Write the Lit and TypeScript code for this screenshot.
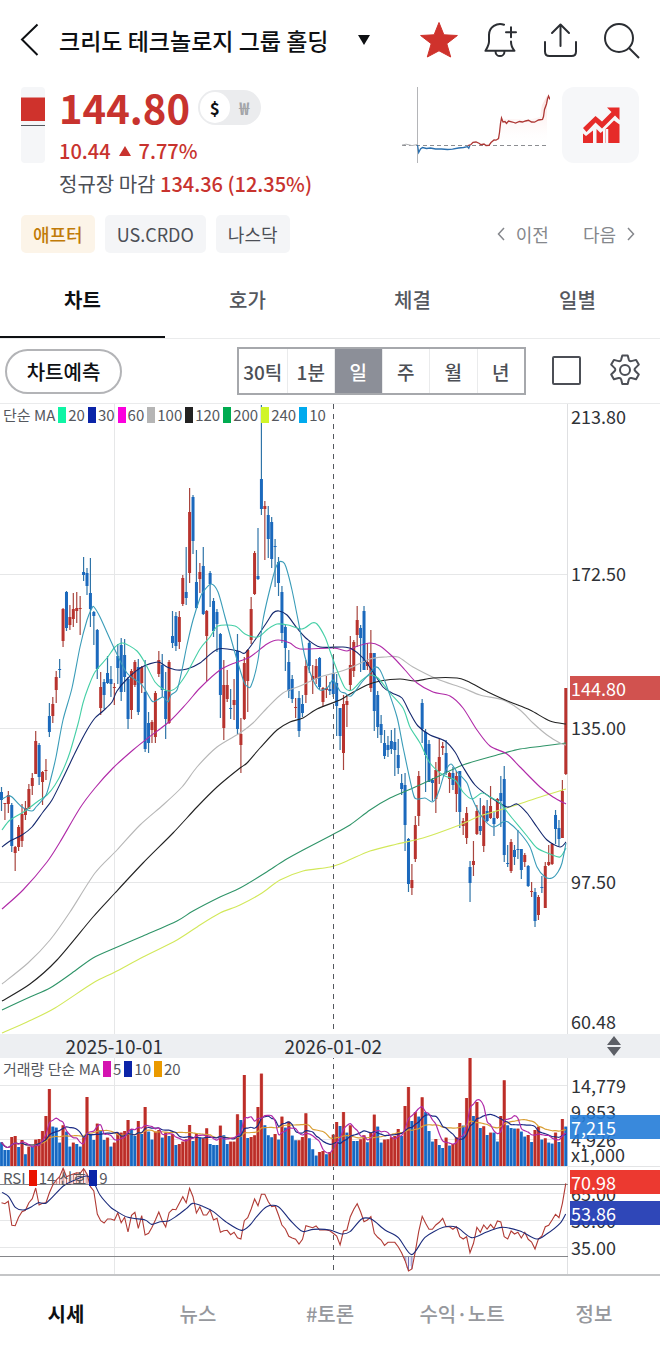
import { LitElement, html, svg, css } from "lit";
import { customElement, property, state } from "lit/decorators.js";
import { classMap } from "lit/directives/class-map.js";

type Point = [number, number];

const PLOT_W = 568;
const STEP = 3.42;
const FIRST_X = 1.5;
const barX = (i: number) => FIRST_X + i * STEP;

// One record per session: direction, high, low, body top, body bottom (screen rows).
const CANDLES = `b787,811,792,800 r803,820,803,804 r791,813,795,804 b803,852,805,846 r846,871,847,853 r825,851,827,847
r804,847,814,841 r801,820,808,815 r784,809,789,809 r773,795,778,786 r731,774,741,774 b743,785,745,777
r771,805,772,782 r759,780,770,771 b703,737,716,732 r697,723,704,716 r671,703,677,690 b659,678,669,670
r608,647,609,641 b591,631,592,628 r605,630,617,625 r593,627,609,619 r592,623,608,611 r596,635,608,609
b557,581,572,575 b568,595,573,586 b558,627,593,609 b611,645,612,616 b629,679,630,669 r672,715,687,708
b679,709,682,695 b656,684,673,683 b666,697,679,684 r683,705,687,688 b644,684,656,668 b638,701,645,692
b639,692,655,677 b677,729,679,719 r669,719,671,710 r660,687,662,685 b659,715,667,712 r666,693,667,683
b660,752,692,749 b712,753,723,743 r720,743,722,730 r691,743,693,737 r651,677,660,674 b654,697,665,690
b672,739,691,719 r660,724,662,723 b611,648,636,643 b612,651,616,646 r611,649,617,642 r575,606,578,604
b547,605,592,598 r488,583,512,573 b495,554,497,541 b550,609,582,608 r563,593,572,579 b547,615,566,614
r610,681,611,636 b571,607,573,584 b598,637,601,631 b609,652,612,624 b633,718,634,695 r660,740,685,728
r670,702,685,699 b689,719,708,709 r679,720,700,705 b634,734,651,729 r718,773,734,745 r657,720,663,719
r649,712,650,681 r597,644,609,640 r551,595,553,594 b528,580,576,579 b405,515,479,509 r501,560,506,509
b506,558,515,539 b517,568,522,559 b539,587,546,547 b557,596,562,583 b586,643,592,633 b624,671,627,648
b650,698,662,691 b675,703,679,699 r698,718,707,708 b691,737,698,731 b695,717,704,713 r660,703,666,695
b641,673,643,666 r665,694,676,680 r659,684,666,679 b657,689,658,687 r687,707,688,702 r676,698,688,690
b682,695,689,691 b655,697,673,694 b674,736,683,706 b708,750,708,736 r695,770,704,753 r695,727,701,705
r636,690,665,685 r640,677,642,671 r606,647,620,635 b625,672,628,638 b606,670,611,670 r643,670,662,666
r630,692,653,688 b653,731,653,711 b691,738,695,727 b715,743,724,735 b730,759,743,756 b736,757,745,750
b730,754,741,749 b728,776,742,750 b739,774,755,768 b774,795,783,789 b773,851,785,825 b838,892,839,884
r864,895,880,888 r816,862,825,859 r771,826,776,816 b699,743,703,729 b729,792,732,755 b740,782,744,782
b778,801,780,783 r762,813,770,799 r739,784,757,771 r742,755,746,748 b740,775,753,772 r772,793,773,779
b767,790,773,785 r771,812,776,794 b771,828,771,812 r818,835,821,826 r807,844,813,838 b861,902,867,883
r841,876,861,865 r805,835,811,834 b798,835,826,831 r805,852,806,846 b800,822,811,821 r786,819,806,818
b811,836,818,824 r798,819,799,818 b776,827,793,801 b766,862,779,855 b845,867,863,864 r839,873,842,871
b845,865,850,857 b830,859,849,850 b849,879,849,870 r853,867,855,862 b865,887,866,886 r882,897,891,892
b888,927,892,921 r895,920,897,915 b876,893,887,888 r862,908,866,908 r845,866,862,865 r843,865,844,864
b810,844,815,829 b820,846,828,839 r780,838,791,838 r688,775,688,774`
  .split(/\s+/)
  .map((s) => ({ up: s[0] === "r", v: s.slice(1).split(",").map(Number) }));

// Bar heights in thirds of a pixel, measured from the volume baseline.
const VOLUMES = `b71 b48 b48 r87 r90 b57 r78 b35 r58 b58 r79 r81 r105 r150 r231 b118 b115 b70 r122 b103 b58 r70 b66 b58 r86
r207 b96 b78 r127 b108 b78 r85 b58 r70 r100 r100 r105 r138 b111 b90 r135 b96 r177 b103 b79 r103 r108 b85 r100 b90
r96 b63 r66 r73 r80 r123 b75 r96 b85 r83 r113 b66 b63 b63 r121 b92 b66 r73 r73 r155 b138 r273 b84 r87 r92
r177 r277 b122 b92 b86 r96 b79 r148 b115 r133 b91 b77 r77 r87 r158 b83 b50 b31 r42 r45 b35 r42 r94 r132 b120
r162 b100 r122 b75 b75 r80 r92 b71 r100 r154 b118 b70 r79 r80 r86 r90 r111 b90 r180 r237 b135 r162 b148 r206 b162
b105 b73 r81 b63 b54 r85 b61 r66 r86 r129 b121 r204 r324 b150 r192 b114 r119 b93 r100 b100 b73 r150 r257 b122 b114
b112 r112 b103 b88 r93 b72 r108 r118 b79 r83 b70 b67 r100 b72 r141 b118`
  .split(/\s+/)
  .map((s) => ({ up: s[0] === "r", h: Number(s.slice(1)) / 3 }));

const RSI = `518 521 514 586 587 562 545 541 518 506 474 525 520 518 488 465 450 440 415 440 436 432 428 430 416 432 470 483
552 572 579 567 567 571 548 578 562 606 556 547 595 557 615 610 592 570 546 572 591 548 538 539 520 500 518 475 500 549
530 555 555 540 570 565 607 602 601 614 607 623 627 572 563 537 507 527 493 493 515 530 528 555 585 597 619 624 628 642
628 587 590 593 588 600 600 600 602 610 618 645 603 600 560 538 521 545 575 570 560 610 622 630 646 637 637 637 650 668
692 723 717 665 605 559 580 598 598 585 577 565 590 590 598 590 620 627 620 668 640 592 607 585 597 583 596 573 576 620
627 603 612 607 624 607 628 636 657 627 618 590 586 570 553 563 520 460`
  .split(/\s+/)
  .map((s, i): Point => [barX(i), Number(s) / 3 - 137]);

const parse = (s: string): Point[] =>
  s.trim().split(/\s+/).map((p) => p.split(",").map(Number) as Point);

const RSI_SIGNAL = parse(`6,487 26,500 46,532 70,540 95,530 115,518 140,518 190,468 220,452 260,438 280,455 300,495 330,530
345,541 384,562 435,570 455,583 480,575 505,573 530,558 560,535 578,520 610,530 640,545 680,577 724,601 750,585 770,560
800,530 835,530 870,570 907,604 940,598 990,600 1025,612 1050,605 1085,567 1115,568 1155,600 1195,623 1235,674 1275,622
1330,592 1370,592 1415,623 1460,606 1505,592 1560,603 1610,627 1640,612 1680,580 1697,552`).map(
  ([x, y]): Point => [x / 3, y / 3 - 137]
);

const AVERAGES = [
  { color: "#d2e85a", pts: `2,1033 27,1022 55,1008 93,983 115,972 143,957 177,940 200,925 220,913 240,905 262,893 280,880 303,871 330,867 347,861 370,851 397,844 423,838 457,826 480,816 510,807 537,798 566,789` },
  { color: "#2f9468", pts: `2,1010 30,997 50,988 72,973 93,958 115,948 143,936 177,921 193,911 220,897 240,888 265,873 285,860 305,849 330,836 350,825 370,810 390,798 413,788 437,777 463,765 497,755 520,749 543,746 566,743` },
  { color: "#b7b7b7", pts: `2,984 28,963 50,940 70,912 95,873 117,850 140,825 163,805 182,787 197,767 217,747 240,733 253,723 267,708 283,693 300,686 320,677 335,673 350,668 370,659 385,657 398,657 413,667 437,679 463,688 480,695 503,700 520,710 533,723 547,735 560,743 566,745` },
  { color: "#222222", pts: `2,1001 30,984 57,960 93,917 115,893 143,863 173,833 197,807 217,787 240,768 247,763 260,748 277,730 290,722 303,718 317,709 340,700 350,694 367,685 380,681 400,679 415,681 433,678 457,678 467,681 490,693 510,702 530,710 550,721 566,724` },
  { color: "#b02aa8", pts: `2,909 23,890 47,862 60,842 80,808 95,788 113,768 133,750 148,738 170,721 187,703 200,688 220,670 237,662 250,657 267,644 278,640 290,643 300,649 333,648 347,651 355,647 370,643 380,646 393,657 405,670 417,683 433,692 450,696 463,708 477,730 490,746 507,754 520,767 540,787 553,797 566,804` },
  { color: "#14286e", pts: `2,847 10,841 22,835 32,827 43,812 52,800 63,778 75,753 87,730 95,718 103,711 112,702 117,691 128,678 142,667 158,662 167,667 177,670 187,669 200,663 218,649 238,651 245,653 255,640 267,622 273,613 279,611 287,615 297,628 307,639 320,647 343,647 352,649 363,658 373,672 383,687 392,693 402,698 410,713 418,726 430,735 445,741 455,752 463,767 475,785 490,797 507,807 517,804 527,813 537,827 547,840 560,847 566,842` },
  { color: "#45cfa6", pts: `2,830 10,820 25,811 37,802 47,795 55,785 63,770 70,752 78,724 83,703 88,688 95,672 107,658 115,647 123,643 137,651 145,663 155,682 163,689 170,691 177,687 187,673 200,649 210,637 218,626 235,626 245,634 258,637 268,629 277,624 288,625 302,629 312,623 317,624 325,637 330,651 337,670 345,688 352,690 362,680 370,675 378,678 390,693 403,708 410,727 420,743 430,763 443,775 455,780 463,792 472,799 482,793 490,797 500,803 512,818 527,836 537,848 550,854 560,857 566,848` },
  { color: "#3a9cb8", pts: `2,799 8,796 12,797 22,807 32,811 36,807 46,795 51,778 56,757 63,720 72,688 80,647 87,620 92,608 94,607 100,617 115,650 127,673 142,685 152,701 157,700 163,697 168,702 171,695 177,690 182,670 187,645 193,620 200,598 203,592 211,584 218,592 225,617 235,653 244,682 247,686 251,686 258,660 263,620 273,577 278,563 283,562 286,567 292,590 300,630 305,657 313,680 320,690 328,687 333,680 340,691 345,693 351,696 362,682 370,673 375,667 380,670 387,687 397,717 403,747 413,793 417,799 425,798 432,802 436,798 440,788 445,772 451,764 457,772 467,783 472,798 482,817 493,827 503,822 508,822 520,833 530,847 537,867 545,877 552,878 558,872 562,863 566,843` },
].map((a) => ({ color: a.color, pts: parse(a.pts) }));

function smooth(p: Point[]): string {
  let d = `M${p[0][0]} ${p[0][1]}`;
  for (let i = 0; i < p.length - 1; i++) {
    const a = p[Math.max(0, i - 1)], b = p[i], c = p[i + 1], e = p[Math.min(p.length - 1, i + 2)];
    d += `C${(b[0] + (c[0] - a[0]) / 7).toFixed(1)} ${(b[1] + (c[1] - a[1]) / 7).toFixed(1)} ${(c[0] - (e[0] - b[0]) / 7).toFixed(1)} ${(c[1] - (e[1] - b[1]) / 7).toFixed(1)} ${c[0]} ${c[1]}`;
  }
  return d;
}

const line = (p: Point[]) => "M" + p.map(([x, y]) => `${x.toFixed(1)} ${y.toFixed(1)}`).join("L");

function volumeAverage(n: number): Point[] {
  return VOLUMES.map((_, i): Point => {
    const part = VOLUMES.slice(Math.max(0, i - n + 1), i + 1);
    return [barX(i), 108 - part.reduce((s, v) => s + v.h, 0) / part.length];
  });
}

const RED = "#b8332e";
const BLUE = "#1b69bd";

const guides = (h: number) => svg`
  <path d="M114.5 0V${h}" stroke="#e6e7e8" />
  <path d="M567.5 0V${h}" stroke="#dfe0e2" />
`;
const yearLine = (h: number, offset = 0) => svg`
  <path d="M333.5 0V${h}" stroke="#55585e" stroke-dasharray="5 5" stroke-dashoffset=${offset} />
`;

interface Label { text: string; at: number; tag?: string }
interface Legend { text?: string; color?: string }

@customElement("chart-panel")
export class ChartPanel extends LitElement {
  static styles = css`
    :host { display: grid; grid-template-columns: minmax(0, 1fr) 92px; position: relative; }
    .plot { display: block; width: 100%; }
    .axis { position: relative; }
    .label {
      position: absolute; left: 3px; transform: translateY(-50%);
      font-size: 18px; line-height: 24px; color: #2f3237; white-space: nowrap;
    }
    .tag { left: 2px; right: 0; padding-left: 1px; color: #fff; }
    .red { background: rgba(201, 52, 48, 0.85); }
    .bright { background: rgba(235, 45, 35, 0.94); }
    .blue { background: rgba(36, 124, 216, 0.9); }
    .navy { background: rgba(34, 60, 180, 0.94); }
    .legend {
      position: absolute; left: 3px; top: 1px; display: flex; align-items: center; gap: 2px;
      font-size: 15px; line-height: 20px; color: #55585e; white-space: nowrap;
    }
    .swatch { width: 8px; height: 16px; margin-left: 1px; }
  `;
  @property({ attribute: false }) labels: Label[] = [];
  @property({ attribute: false }) legend: Legend[] = [];
  @property({ attribute: false }) drawing: unknown;
  @property({ type: Number }) size = 100;
  @property() name = "";

  render() {
    return html`
      <svg class="plot" height=${this.size} viewBox="0 0 ${PLOT_W} ${this.size}" preserveAspectRatio="none"
        role="img" aria-label=${this.name} fill="none">${this.drawing}</svg>
      <div class="axis">
        ${this.labels.map((l) => html`<span
          class=${classMap({ label: true, tag: !!l.tag, [l.tag ?? "plain"]: true })}
          style="top:${l.at}px">${l.text}</span>`)}
      </div>
      <div class="legend">
        ${this.legend.map((l) => l.color
          ? html`<span class="swatch" style="background:${l.color}"></span>`
          : html`<span>${l.text}</span>`)}
      </div>
    `;
  }
}

@customElement("app-root")
export class AppRoot extends LitElement {
  static styles = css`
    :host {
      display: block; background: #fff; color: #0e1013; overflow: hidden;
      font-family: "Noto Sans CJK KR", "Noto Sans", sans-serif;
    }
    * { box-sizing: border-box; }
    button, a { font: inherit; color: inherit; text-decoration: none; }
    button { background: none; border: 0; margin: 0; padding: 0; cursor: pointer; }
    svg { display: block; }

    .header { display: flex; align-items: center; height: 80px; padding: 0 18px 0 20px; }
    .back { width: 39px; }
    .title { display: flex; align-items: center; gap: 30px; font-size: 23px; line-height: 32px; white-space: nowrap; }
    .title h1 { margin: 0; font-size: inherit; font-weight: 500; }
    .actions { display: flex; gap: 21px; margin-left: auto; }

    .quote { display: flex; align-items: flex-start; padding: 7px 21px 0; }
    .daybar { width: 24px; margin-right: 14px; }
    .figures { display: flex; flex-direction: column; white-space: nowrap; color: #c8332e; }
    .price { display: flex; align-items: center; gap: 8px; height: 40px; margin-bottom: 11px; }
    .price strong { font-size: 40px; line-height: 40px; font-weight: 700; }
    .currency { display: flex; padding: 2px; width: 63px; height: 35px; border-radius: 18px; background: #ebecee; }
    .currency button { flex: 1; border-radius: 16px; font-size: 17px; line-height: 31px; font-weight: 700; color: #a2a4a8; }
    .currency .on { background: #fff; color: #0e1013; }
    .change { display: flex; align-items: center; gap: 8px; font-size: 20px; line-height: 26px; font-weight: 500; margin-bottom: 7px; }
    .close { font-size: 20px; line-height: 26px; font-weight: 500; }
    .close span { color: #4c4f56; font-weight: 400; }
    .spark { margin-left: auto; }
    .insight { display: grid; place-items: center; width: 77px; height: 76px; margin-left: 12px; border-radius: 12px; background: #f6f7f9; }

    .meta { display: flex; align-items: center; gap: 10px; padding: 18px 25px 10px 21px; }
    .chip { height: 38px; padding: 0 12px; border-radius: 5px; background: #f4f5f7; color: #4c4f56; font-size: 18px; line-height: 38px; white-space: nowrap; }
    .chip.after { background: #fcf4e8; color: #c17b08; font-weight: 500; }
    .pager { display: flex; gap: 34px; margin-left: auto; color: #85878c; font-size: 18px; line-height: 26px; white-space: nowrap; }
    .pager button { display: flex; align-items: center; gap: 11px; }

    .tabs { display: grid; grid-template-columns: repeat(4, 1fr); border-bottom: 1px solid #eaebec; }
    .tabs button { height: 75px; font-size: 20px; font-weight: 500; color: #55585e; border-bottom: 2px solid transparent; }
    .tabs .on { color: #0e1013; font-weight: 700; border-color: #0e1013; }

    .toolbar { display: flex; align-items: center; height: 65px; padding: 0 18px 0 5px; border-bottom: 1px solid #eaebec; }
    .forecast { width: 117px; height: 45px; border: 2px solid #b3b4b7; border-radius: 23px; font-size: 20px; font-weight: 500; color: #0e1013; }
    .periods { display: grid; grid-template-columns: repeat(6, 1fr); width: 289px; margin-left: auto; border: 2px solid #a6a8ac; }
    .periods button { height: 44px; font-size: 19px; font-weight: 500; color: #4c4f56; border-left: 1px solid #eaebec; white-space: nowrap; }
    .periods button:first-child { border-left: 0; }
    .periods .on { background: #8c8f98; color: #fff; }
    .tool { margin-left: 26px; }

    .dates { display: grid; grid-template-columns: minmax(0, 1fr) 92px; height: 24px; background: #edeff2; font-size: 19px; line-height: 24px; color: #2f3237; }
    .track { position: relative; }
    .date { position: absolute; transform: translateX(-50%); }
    .sort { justify-self: center; align-self: center; }
    .split { border-top: 1px solid #e3e4e6; }

    .bottom { display: grid; grid-template-columns: repeat(5, 1fr); border-top: 2px solid #c4c5c7; }
    .bottom a { height: 76px; line-height: 76px; text-align: center; font-size: 20px; font-weight: 500; color: #96989d; }
    .bottom .on { color: #0e1013; font-weight: 700; }
  `;

  @state() private tab = "차트";
  @state() private period = "일";
  @state() private currency = "$";

  private priceDrawing() {
    const top = 404;
    return svg`
      <path d="M0 170.5H568M0 324.5H568M0 478.5H568" stroke="#e6e7e8" />
      ${guides(630)}
      ${CANDLES.map(({ up, v }, i) => svg`
        <path d="M${barX(i)} ${v[0] - top}V${v[1] - top}" stroke=${up ? "#a8453e" : "#2f74a8"} stroke-width="1.2" />
        <rect x=${barX(i) - 1.5} y=${v[2] - top} width="3" height=${Math.max(1, v[3] - v[2])} fill=${up ? RED : BLUE} />`)}
      <g transform="translate(0 ${-top})" stroke-width="1.1">
        ${AVERAGES.map((a) => svg`<path d=${smooth(a.pts)} stroke=${a.color} />`)}
      </g>
      ${yearLine(630)}
    `;
  }

  private volumeDrawing() {
    return svg`
      <path d="M0 27.5H568M0 54.5H568M0 81.5H568" stroke="#e6e7e8" />
      ${guides(108)}
      ${VOLUMES.map(({ up, h }, i) => svg`
        <rect x=${barX(i) - 1.7} y=${108 - h} width="3.4" height=${h} fill=${up ? "#e58a80" : "#7db6ea"} />
        <rect x=${barX(i) - 1.3} y=${108 - h} width="2.6" height=${h} fill=${up ? "#bb2d28" : "#1768c2"} />`)}
      <path d=${smooth(volumeAverage(20))} stroke="#d99f35" stroke-width="1.2" />
      <path d=${smooth(volumeAverage(10))} stroke="#1c2c86" stroke-width="1.2" />
      <path d=${smooth(volumeAverage(5))} stroke="#b02aa8" stroke-width="1.2" />
      ${yearLine(108, 4)}
    `;
  }

  private rsiDrawing() {
    const hot = RSI.filter(([x, y]) => x < 100 && y < 17);
    const cold = RSI.filter(([, y]) => y > 90);
    return svg`
      <path d="M0 26.5H568M0 53.5H568M0 80.5H568" stroke="#e6e7e8" />
      ${guides(108)}
      ${hot.map(([x, y]) => svg`<path d="M${x} ${y}V17" stroke="#c66460" /><path d="M${x + 1.7} ${y + 1}V17" stroke="#f0c9c6" />`)}
      ${cold.map(([x, y]) => svg`<path d="M${x} 90V${y}" stroke="#6c6cb8" /><path d="M${x - 1.7} 90V${y - 3}" stroke="#cfcbea" />`)}
      <path d="M0 17.5H568M0 89.5H568" stroke="#85868a" />
      <path d=${line(RSI)} stroke="#b03a34" stroke-width="1.1" />
      <path d=${smooth(RSI_SIGNAL)} stroke="#1c2c7c" stroke-width="1.1" />
      ${yearLine(108, 2)}
    `;
  }

  render() {
    const ma: Legend[] = [
      ["#0ff5a5", "20"], ["#0b24a8", "30"], ["#fb00dd", "60"], ["#b5b5b5", "100"],
      ["#222222", "120"], ["#00ab50", "200"], ["#d0f52a", "240"], ["#00aaee", "10"],
    ].flatMap(([color, text]) => [{ color }, { text }]);

    return html`
      <header class="header">
        <button class="back" aria-label="뒤로">
          <svg width="20" height="34" viewBox="0 0 20 34" fill="none" stroke="#0e1013" stroke-width="2"><path d="M17.5 1.500 2 16.500 17.500 32" /></svg>
        </button>
        <button class="title">
          <h1>크리도 테크놀로지 그룹 홀딩</h1>
          <svg width="12" height="10" viewBox="0 0 12 10" fill="#0e1013"><path d="M0 0h12L6 10z" /></svg>
        </button>
        <div class="actions">
          <button aria-label="관심종목">
            <svg width="40" height="40" viewBox="0 0 40 40" fill="#cf322c"><path d="m20 2.500 4.900 12.300 13.500.7-10.600 8.200 3.900 13.300L20 30.800 8.300 37l3.900-13.300L1.600 15.500l13.500-.7z" stroke="#cf322c" stroke-width="1" stroke-linejoin="round" /></svg>
          </button>
          <button aria-label="알림 추가">
            <svg width="40" height="40" viewBox="0 0 40 40" fill="none" stroke="#2b2e33" stroke-width="2" stroke-linecap="round" stroke-linejoin="round">
              <path d="M24 4.700C17 2.200 9 7 9 15v6.500c0 3.500-2 6.500-3.500 9.300h29C32.500 28.500 31 26 31 21.500M31 7.300v10M26 12.300h10M15.500 31.200c0 6.500 9 6.500 9 0" />
            </svg>
          </button>
          <button aria-label="공유">
            <svg width="40" height="40" viewBox="0 0 40 40" fill="none" stroke="#2b2e33" stroke-width="2" stroke-linecap="round" stroke-linejoin="round">
              <path d="M19.500 26V5M11 13l8.500-8.500L28 13M4 22v9.500c0 3 1.500 4.500 4.500 4.500h22c3 0 4.500-1.500 4.500-4.500V22" />
            </svg>
          </button>
          <button aria-label="검색">
            <svg width="40" height="40" viewBox="0 0 40 40" fill="none" stroke="#2b2e33" stroke-width="2"><circle cx="17" cy="18" r="14" /><path d="m27 28 10 10" /></svg>
          </button>
        </div>
      </header>

      <section class="quote">
        <svg class="daybar" width="24" height="76" viewBox="0 0 24 76"><rect width="24" height="76" rx="4" fill="#f5f6f8" /><rect y="10.500" width="24" height="23.500" fill="#cf322c" /><path d="M0 38.500h24" stroke="#55585e" /></svg>
        <div class="figures">
          <div class="price">
            <strong>144.80</strong>
            <div class="currency" role="group" aria-label="통화">
              ${["$", "₩"].map((c) => html`<button class=${classMap({ on: this.currency === c })} @click=${() => (this.currency = c)}>${c}</button>`)}
            </div>
          </div>
          <div class="change">
            <span>10.44</span>
            <svg width="12" height="10" viewBox="0 0 12 10" fill="#c8332e"><path d="M6 0 12 10H0z" /></svg>
            <span>7.77%</span>
          </div>
          <div class="close"><span>정규장 마감</span> 134.36 (12.35%)</div>
        </div>
        <svg class="spark" width="148" height="76" viewBox="402 87 148 76" fill="none" role="img" aria-label="당일 추이">
          <defs><linearGradient id="fade" x1="0" y1="0" x2="0" y2="1"><stop offset="0" stop-color="#f4b9b4" stop-opacity=".5" /><stop offset="1" stop-color="#fff" stop-opacity="0" /></linearGradient></defs>
          <path d="M488 145l5-4 5-4 4-18h12l14 1 12-3 2-12 5-9v49z" fill="url(#fade)" />
          <path d="M417.500 87v76" stroke="#b4b5b8" />
          <path d="M402 145.500h146" stroke="#8c8e92" stroke-dasharray="4 3" />
          <path d="m402 145 4-.8 3 .6 3 .8 5-1" stroke="#b4b5b8" />
          <path d="m417.500 145 1.200 7.500 1.800-3.500 2-1.500 4 1 4-.5 5 1 6 0 6 .5 5-.3 6-1.200 5-.5 4-.8 1.300 1.500 1.200-3.200" stroke="#2a6fae" stroke-width="1.300" />
          <path d="m468 145.500 3-1 2-2.200 3-.3 3 1.200 2 1.500 3-.7 2 1.500 3-.2 2-2.800 3-2.500 2 .2 2.500-1.700 1-6 1-9 1-5.500 1.500 4 2-.5 1.500 2 2-2.500 4 1 3 1 4-1.500 3 .5 3-1 3-.7 3 1.700 3 .2 4-2.200 4-.5 1-3 1-7 2-5.500 1-5 1-3 1.500 3.500" stroke="#ad3734" stroke-width="1.300" />
        </svg>
        <button class="insight" aria-label="차트 분석">
          <svg width="40" height="40" viewBox="0 0 40 40" fill="#e62b29">
            <path d="M2 28.500 5 31l7-5.500V38H2zM15.500 24l4 4 2.500-2v12h-6.500zM2 23 14.500 11l6.500 5.500L30.500 7 26 2.500h12.500V15L34 10.500 21 23.500l-6.500-6L5.500 27zM24.500 24l3.500-3.500V38h-3.500zM28 20.500l5-5 5.500 4V38H28z" />
            <path d="M13.800 22v17M26 24v15" stroke="#f6f7f9" stroke-width="2.500" />
          </svg>
        </button>
      </section>

      <section class="meta">
        <span class="chip after">애프터</span>
        <span class="chip">US.CRDO</span>
        <span class="chip">나스닥</span>
        <div class="pager">
          <button><svg width="8" height="14" viewBox="0 0 8 14" fill="none" stroke="#85878c" stroke-width="1.500"><path d="M7 1 1.500 7 7 13" /></svg>이전</button>
          <button>다음<svg width="8" height="14" viewBox="0 0 8 14" fill="none" stroke="#85878c" stroke-width="1.500"><path d="M1 1 6.500 7 1 13" /></svg></button>
        </div>
      </section>

      <nav class="tabs">
        ${["차트", "호가", "체결", "일별"].map((t) => html`<button class=${classMap({ on: this.tab === t })} @click=${() => (this.tab = t)}>${t}</button>`)}
      </nav>

      <div class="toolbar">
        <button class="forecast">차트예측</button>
        <div class="periods" role="group" aria-label="주기">
          ${["30틱", "1분", "일", "주", "월", "년"].map((p) => html`<button class=${classMap({ on: this.period === p })} @click=${() => (this.period = p)}>${p}</button>`)}
        </div>
        <button class="tool" aria-label="전체 화면">
          <svg width="30" height="30" viewBox="0 0 30 30" fill="none" stroke="#4c4f56" stroke-width="2"><rect x="1" y="1" width="27" height="27" rx="1" /></svg>
        </button>
        <button class="tool" aria-label="설정">
          <svg width="34" height="34" viewBox="0 0 34 34" fill="none" stroke="#4c4f56" stroke-width="2" stroke-linejoin="round">
            <path d="M14.300 1.500h5.400l1.100 4.100c.3 1 1.600 1.700 2.600 1.500l4.700-1.200 2.700 4.700-3.500 3.500c-.8.800-.8 2.100 0 2.900l3.500 3.500-2.700 4.700-4.700-1.200c-1-.2-2.300.5-2.600 1.500l-1.100 4.600h-5.400l-1.100-4.600c-.3-1-1.600-1.700-2.600-1.500l-4.700 1.200-2.700-4.700 3.500-3.500c.8-.8.8-2.100 0-2.900l-3.500-3.500 2.700-4.700 4.700 1.200c1 .2 2.300-.5 2.600-1.500z" /><circle cx="17" cy="16" r="5" />
          </svg>
        </button>
      </div>

      <chart-panel name="가격 차트" .size=${630} .drawing=${this.priceDrawing()}
        .legend=${[{ text: "단순 MA" }, ...ma]}
        .labels=${[
          { text: "213.80", at: 12 }, { text: "172.50", at: 169 }, { text: "135.00", at: 323 },
          { text: "97.50", at: 477 }, { text: "60.48", at: 617 }, { text: "144.80", at: 284, tag: "red" },
        ]}></chart-panel>

      <div class="dates">
        <div class="track">
          <span class="date" style="left:${(barX(33) / PLOT_W) * 100}%">2025-10-01</span>
          <span class="date" style="left:${(barX(97) / PLOT_W) * 100}%">2026-01-02</span>
        </div>
        <svg class="sort" width="14" height="20" viewBox="0 0 14 20" fill="#5c5f66"><path d="m7 0 7 9H0zM0 11h14l-7 9z" /></svg>
      </div>

      <chart-panel name="거래량" .size=${108} .drawing=${this.volumeDrawing()}
        .legend=${[{ text: "거래량 단순 MA" }, { color: "#d413b0" }, { text: "5" }, { color: "#0b24a8" }, { text: "10" }, { color: "#ea9a00" }, { text: "20" }]}
        .labels=${[
          { text: "14,779", at: 27 }, { text: "9,853", at: 53 }, { text: "4,926", at: 81 }, { text: "x1,000", at: 96 },
          { text: "7,215", at: 69, tag: "blue" },
        ]}></chart-panel>

      <chart-panel class="split" name="RSI" .size=${107} .drawing=${this.rsiDrawing()}
        .legend=${[{ text: "RSI" }, { color: "#ea1400" }, { text: "14 신호" }, { color: "#0b24a8" }, { text: "9" }]}
        .labels=${[
          { text: "65.00", at: 26 }, { text: "50.00", at: 53 }, { text: "35.00", at: 80 },
          { text: "70.98", at: 15, tag: "bright" }, { text: "53.86", at: 46, tag: "navy" },
        ]}></chart-panel>

      <nav class="bottom">
        ${["시세", "뉴스", "#토론", "수익·노트", "정보"].map((t, i) => html`<a href="#${i}" class=${classMap({ on: i === 0 })}>${t}</a>`)}
      </nav>
    `;
  }
}
